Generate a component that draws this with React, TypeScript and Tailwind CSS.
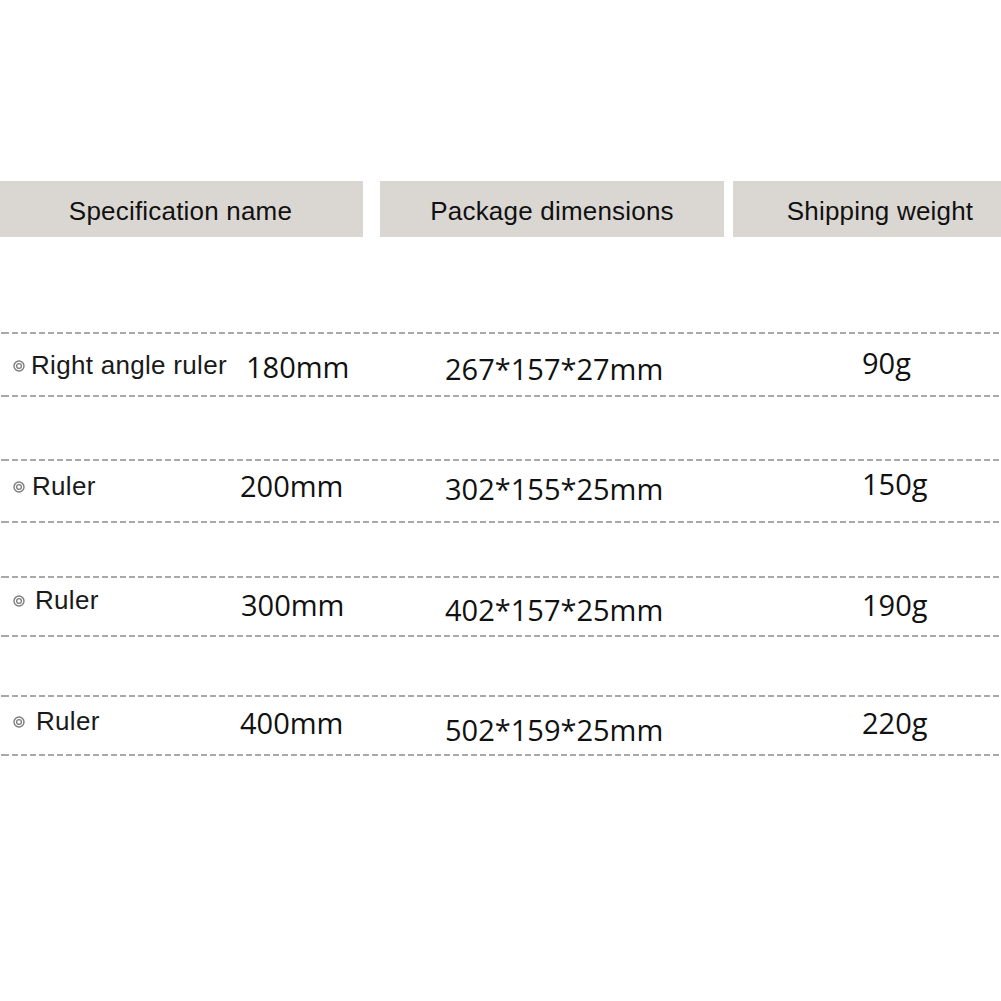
const rows = [
  {
    name: "Right angle ruler",
    size: "180mm",
    dims: "267*157*27mm",
    weight: "90g",
    gapCls: "mt-[95px]",
    bodyCls: "h-[61px]",
    nameCls: "gap-[6px] mt-[2px]",
    sizeCls: "pl-[6px] mt-[4px]",
    dimsCls: "mt-[8px]",
    weightCls: "-mt-[4px]",
  },
  {
    name: "Ruler",
    size: "200mm",
    dims: "302*155*25mm",
    weight: "150g",
    gapCls: "mt-[62px]",
    bodyCls: "h-[60px]",
    nameCls: "gap-[7px] -mt-[9px]",
    sizeCls: "pl-0 -mt-[10px]",
    dimsCls: "-mt-[4px]",
    weightCls: "-mt-[14px]",
  },
  {
    name: "Ruler",
    size: "300mm",
    dims: "402*157*25mm",
    weight: "190g",
    gapCls: "mt-[53px]",
    bodyCls: "h-[57px]",
    nameCls: "gap-[10px] -mt-[12px]",
    sizeCls: "pl-px -mt-[4px]",
    dimsCls: "mt-[6px]",
    weightCls: "-mt-[4px]",
  },
  {
    name: "Ruler",
    size: "400mm",
    dims: "502*159*25mm",
    weight: "220g",
    gapCls: "mt-[58px]",
    bodyCls: "h-[57px]",
    nameCls: "gap-[11px] -mt-[8px]",
    sizeCls: "pl-0 -mt-[6px]",
    dimsCls: "mt-[8px]",
    weightCls: "-mt-[6px]",
  },
];

const Dashed = () => (
  <div className="h-[2px] w-full bg-[repeating-linear-gradient(90deg,#a9a9a9_0_6px,transparent_6px_9px)] bg-[position:3px_0]" />
);

const Bullet = () => (
  <svg width="12" height="12" viewBox="0 0 12 12" className="shrink-0">
    <circle cx="6" cy="6" r="5" fill="none" stroke="#7d7d7d" strokeWidth="1.4" />
    <circle cx="6" cy="6" r="2.4" fill="none" stroke="#7d7d7d" strokeWidth="1.3" />
  </svg>
);

const App = () => {
  return (
    <div className="w-[1001px] h-[1001px] bg-white overflow-hidden text-[#111]">
      {/* Header bars */}
      <div className="mt-[181px] flex h-[56px] font-['Liberation_Sans',Arial,sans-serif] text-[26px] tracking-[0.2px]">
        <div className="w-[363px] bg-[#dad7d3] flex items-center justify-center pt-[5px] pr-[2px]">
          Specification name
        </div>
        <div className="w-[344px] ml-[17px] bg-[#dad7d3] flex items-center justify-center pt-[5px]">
          Package dimensions
        </div>
        <div className="flex-1 ml-[9px] bg-[#dad7d3] flex items-center justify-center pt-[5px] pl-[26px]">
          Shipping weight
        </div>
      </div>

      {/* Rows */}
      {rows.map((r, i) => (
        <div key={i} className={r.gapCls}>
          <Dashed />
          <div
            className={`grid grid-cols-[240px_205px_417px_1fr] items-center ${r.bodyCls}`}
          >
            <div
              className={`flex items-center pl-[13px] font-['Liberation_Sans',Arial,sans-serif] text-[26px] tracking-[0.3px] text-[#1a1a1a] ${r.nameCls}`}
            >
              <Bullet />
              <span>{r.name}</span>
            </div>
            <div className={`font-['Open_Sans',sans-serif] text-[29px] ${r.sizeCls}`}>
              {r.size}
            </div>
            <div className={`font-['Open_Sans',sans-serif] text-[29px] ${r.dimsCls}`}>
              {r.dims}
            </div>
            <div className={`font-['Open_Sans',sans-serif] text-[29px] ${r.weightCls}`}>
              {r.weight}
            </div>
          </div>
          <Dashed />
        </div>
      ))}
    </div>
  );
};

export default App;
